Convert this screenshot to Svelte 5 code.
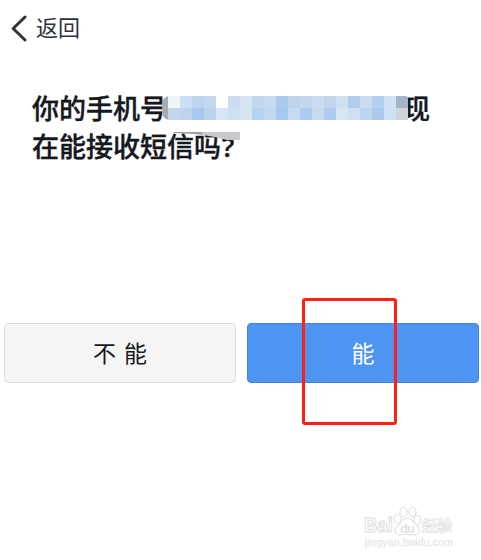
<script lang="ts">
  const topCells = ['#f0f6f8', '#cbdff5', '#bbd5f0', '#c2d8ee', '#fffffc', '#cbdcf3', '#d5e5f3', '#c1d7ee', '#c8dcf0', '#abcaee', '#bdd5ec', '#c2d7ec', '#c9dcf0', '#c1d6ed', '#d0e1f2', '#afceee', '#cbddf2', '#b5cff0', '#d2e0f5', '#a4b4c7'];
  const bottomCells = ['#c2d5ed', '#bfd3ef', '#a9c8f0', '#bcd3ef', '#d5e6f4', '#cfe1f5', '#d3e4f3', '#b5d2ee', '#c0d8f0', '#a8c8f0', '#c6daf2', '#aecbf2', '#c5dbf0', '#aecbf1', '#d6e6f3', '#cfe0f4', '#bdd5f0', '#adcaed', '#cfe0f5', '#d0d4d8'];
  const cells = [...topCells, ...bottomCells];
</script>

<main>
  <header>
    <svg class="chevron" width="16" height="28" viewBox="0 0 16 28">
      <path d="M14 3 L2.2 14.5 L14 26" />
    </svg>
    <span>返回</span>
  </header>

  <h1>
    <span class="line">
      <span>你的手机号</span>
      <span class="mosaic">
        {#each cells as color}<i style="background: {color}"></i>{/each}
      </span>
      <span>现</span>
    </span>
    <span class="line">
      <span>在能接收短信吗<span class="mark">?</span></span>
      <svg class="smudge" width="66" height="8" viewBox="0 0 66 8">
        <path d="M0 0H66V8H53Q28 1 0 1Z" fill="#cacacb" />
        <path d="M0 0H28V2.5Q14 1 0 1Z" fill="#9b9ca0" />
      </svg>
    </span>
  </h1>

  <div class="buttons">
    <button class="no">不 能</button>
    <button class="yes">能<span class="marker"></span></button>
  </div>

  <footer>
    <svg width="100" height="46" viewBox="0 0 100 46">
      <g class="logo">
        <text x="0" y="27" font-size="20" font-weight="700" textLength="29" lengthAdjust="spacingAndGlyphs">Bai</text>
        <ellipse cx="33.5" cy="14" rx="3.6" ry="4.8" />
        <ellipse cx="39.5" cy="7" rx="3.6" ry="4.8" />
        <ellipse cx="48.5" cy="7" rx="3.6" ry="4.8" />
        <ellipse cx="53.5" cy="15" rx="3.4" ry="4.6" />
        <path d="M43.5 13.5C38 13.5 37 18 34 20.5C28.5 25 31 30.5 37 30C41 29 45 29 49 30C55 30.5 58 25 53 20.5C49.5 18 49 13.5 43.5 13.5Z" />
        <text class="du" x="36" y="27.5" font-size="13" font-weight="700" textLength="15">du</text>
        <text class="cjk" x="58" y="26" font-size="15" font-weight="700" textLength="30">经验</text>
      </g>
      <text class="url" x="1" y="40.5" font-size="10.5" textLength="88">jingyan.baidu.com</text>
    </svg>
  </footer>
</main>

<style>
  :global(body) {
    margin: 0;
    background: #fff;
  }

  main {
    height: 560px;
    display: flex;
    flex-direction: column;
    overflow: hidden;
    color: #15181e;
    font-family: "Liberation Sans", "Noto Sans CJK SC", sans-serif;
  }

  header {
    height: 56px;
    display: flex;
    align-items: center;
    gap: 9px;
    padding-left: 11px;
    color: #30323b;
    font-size: 22px;
  }

  header span {
    line-height: 28px;
    padding-top: 1px;
  }

  .chevron path {
    fill: none;
    stroke: #30323b;
    stroke-width: 3;
    stroke-linecap: round;
    stroke-linejoin: round;
  }

  h1 {
    height: 76px;
    margin: 33px 0 0 32px;
    font-family: "Noto Sans CJK SC", sans-serif;
    font-size: 27px;
    font-weight: 500;
    line-height: 38px;
    white-space: nowrap;
    -webkit-text-stroke: 0.4px #15181e;
  }

  .line {
    position: relative;
    display: flex;
    height: 38px;
  }

  .mark {
    margin-left: 1px;
    font-family: "Open Sans", sans-serif;
    font-weight: 600;
    line-height: 1;
  }

  .mosaic {
    position: relative;
    display: grid;
    grid-template-columns: repeat(20, 12px);
    grid-auto-rows: 12px;
    height: 24px;
    padding-left: 6px;
    margin: 7px -5px 0;
    border-radius: 8px 3px 3px 8px;
    overflow: hidden;
    background: #aaa9ac;
  }

  .smudge {
    position: absolute;
    left: 142px;
    top: 5px;
  }

  .buttons {
    display: flex;
    gap: 11px;
    padding: 158px 2px 0 4px;
  }

  button {
    flex: 1;
    height: 60px;
    box-sizing: border-box;
    padding: 0 0 2px;
    border: 1px solid #dedede;
    border-radius: 4px;
    background: #f5f5f5;
    color: #15181e;
    font-family: "Noto Sans CJK SC", sans-serif;
    font-size: 23px;
    line-height: 56px;
    word-spacing: 3px;
  }

  .yes {
    position: relative;
    border-color: #4582dc;
    background: #4e94f2;
    color: #fff;
  }

  .marker {
    position: absolute;
    left: 54px;
    top: -26px;
    width: 89px;
    height: 121px;
    border: 3px solid #ff2015;
    border-radius: 3px;
  }

  footer {
    display: flex;
    justify-content: flex-end;
    margin-top: auto;
    padding: 0 17px 9px 0;
  }

  .logo {
    fill: #fff;
    stroke: #dedede;
    stroke-width: 1;
  }

  .logo .du {
    fill: #e2e2e2;
    stroke: none;
  }

  .logo .cjk {
    font-family: "Noto Sans CJK SC", sans-serif;
    stroke-width: 0.7;
  }

  .url {
    fill: #e6e6e6;
    stroke: #e9e9e9;
    stroke-width: 0.3;
  }
</style>
